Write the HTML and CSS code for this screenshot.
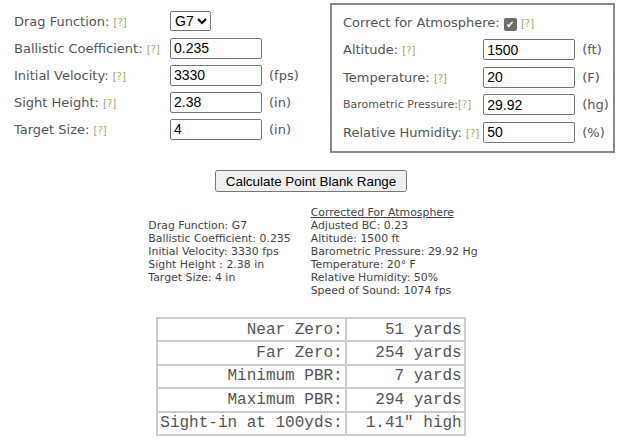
FILE: index.html
```html
<!DOCTYPE html>
<html lang="en">
<head>
    <meta charset="UTF-8">
    <title>Point Blank Range Calculator</title>
    <link rel="stylesheet" href="styles.css">
</head>
<body>
    <div class="top">
        <table class="inputs main">
            <tr>
                <td class="label">Drag Function: <a class="help">[<b>?</b>]</a></td>
                <td><select class="drag"><option>G1</option><option selected>G7</option></select></td>
                <td class="unit"></td>
            </tr>
            <tr>
                <td class="label">Ballistic Coefficient: <a class="help">[<b>?</b>]</a></td>
                <td><input type="text" value="0.235"></td>
                <td class="unit"></td>
            </tr>
            <tr>
                <td class="label">Initial Velocity: <a class="help">[<b>?</b>]</a></td>
                <td><input type="text" value="3330"></td>
                <td class="unit">(fps)</td>
            </tr>
            <tr>
                <td class="label">Sight Height: <a class="help">[<b>?</b>]</a></td>
                <td><input type="text" value="2.38"></td>
                <td class="unit">(in)</td>
            </tr>
            <tr>
                <td class="label">Target Size: <a class="help">[<b>?</b>]</a></td>
                <td><input type="text" value="4"></td>
                <td class="unit">(in)</td>
            </tr>
        </table>

        <div class="atmo">
            <div class="atmo-head">Correct for Atmosphere: <span class="check">&#10004;</span> <a class="help">[<b>?</b>]</a></div>
            <table class="inputs">
                <tr>
                    <td class="label">Altitude: <a class="help">[<b>?</b>]</a></td>
                    <td><input type="text" value="1500"></td>
                    <td class="unit">(ft)</td>
                </tr>
                <tr>
                    <td class="label">Temperature: <a class="help">[<b>?</b>]</a></td>
                    <td><input type="text" value="20"></td>
                    <td class="unit">(F)</td>
                </tr>
                <tr>
                    <td class="label small">Barometric Pressure:<a class="help">[<b>?</b>]</a></td>
                    <td><input type="text" value="29.92"></td>
                    <td class="unit">(hg)</td>
                </tr>
                <tr>
                    <td class="label">Relative Humidity: <a class="help">[<b>?</b>]</a></td>
                    <td><input type="text" value="50"></td>
                    <td class="unit">(%)</td>
                </tr>
            </table>
        </div>
    </div>

    <div class="calc">
        <button>Calculate Point Blank Range</button>
    </div>

    <div class="summary">
        <div class="summary-col">
            Drag Function: G7<br>
            Ballistic Coefficient: 0.235<br>
            Initial Velocity: 3330 fps<br>
            Sight Height : 2.38 in<br>
            Target Size: 4 in
        </div>
        <div class="summary-col">
            <u>Corrected For Atmosphere</u><br>
            Adjusted BC: 0.23<br>
            Altitude: 1500 ft<br>
            Barometric Pressure: 29.92 Hg<br>
            Temperature: 20&deg; F<br>
            Relative Humidity: 50%<br>
            Speed of Sound: 1074 fps
        </div>
    </div>

    <table class="results">
        <tr><td>Near Zero:</td><td>51 yards</td></tr>
        <tr><td>Far Zero:</td><td>254 yards</td></tr>
        <tr><td>Minimum PBR:</td><td>7 yards</td></tr>
        <tr><td>Maximum PBR:</td><td>294 yards</td></tr>
        <tr><td>Sight-in at 100yds:</td><td>1.41" high</td></tr>
    </table>
</body>
</html>
```

FILE: styles.css
```css
body {
    font-family: "DejaVu Sans", Verdana, sans-serif;
    color: #555;
    margin: 0;
    padding: 0;
}
.top {
    display: flex;
    justify-content: space-between;
    align-items: flex-start;
    padding: 3px 7px 0 12px;
}
.inputs {
    border-collapse: collapse;
}
.inputs td {
    padding: 3px 2px;
    height: 20.5px;
}
.main {
    margin-top: 5px;
}
.main td:first-child {
    width: 152px;
}
.label {
    font-size: 13px;
    white-space: nowrap;
}
.label.small {
    font-size: 11px;
}
.help {
    font-size: 10px;
    color: #a98;
}
.help b {
    font-weight: normal;
    color: #9b3;
}
.unit {
    font-size: 13px;
    padding-left: 5px !important;
}
input[type="text"] {
    width: 92px;
    height: 21px;
    box-sizing: border-box;
    font-family: "Liberation Sans", Arial, sans-serif;
    font-size: 14px;
    color: #000;
    padding: 1px 3px;
    border: 1px solid #767676;
    border-radius: 2px;
}
.drag {
    font-family: "Liberation Sans", Arial, sans-serif;
    font-size: 14px;
    height: 20px;
    color: #000;
}
.atmo {
    border: 2px solid #888;
    padding: 10px 8px 5px 9px;
    width: 264px;
}
.atmo-head {
    font-size: 13px;
    padding: 0 0 5px 2px;
}
.atmo .inputs td {
    height: 21.5px;
}
.atmo .inputs td:first-child {
    width: 143px;
}
.check {
    display: inline-block;
    width: 13px;
    height: 13px;
    background: #6b6b6b;
    color: #fff;
    border-radius: 2px;
    font-size: 10px;
    line-height: 13px;
    text-align: center;
    vertical-align: -1px;
}
.calc {
    text-align: center;
    margin-top: 17px;
}
button {
    font-family: "Liberation Sans", Arial, sans-serif;
    font-size: 13.4px;
    padding: 1px 9px;
    height: 22px;
    color: #000;
}
.summary {
    display: flex;
    justify-content: center;
    align-items: center;
    gap: 20px;
    margin-top: 14px;
    padding-left: 4px;
    font-size: 10.9px;
    line-height: 13px;
    color: #444;
}
.results {
    border-collapse: collapse;
    margin: 20px auto 0;
    font-family: "Liberation Mono", "Courier New", monospace;
    font-size: 16px;
    color: #555;
}
.results td {
    border: 2px solid #ccc;
    text-align: right;
    padding: 1.7px 2px;
    white-space: nowrap;
}
.results td:first-child {
    width: 182px;
}
.results td:last-child {
    width: 113px;
}
```
